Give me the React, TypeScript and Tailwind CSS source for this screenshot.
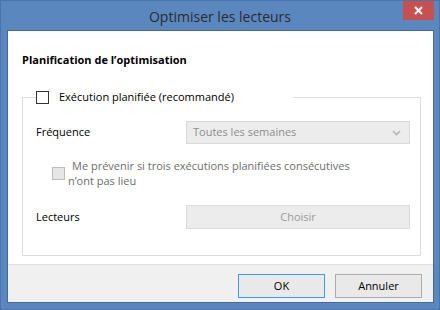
const font = { fontFamily: '"Segoe UI", "Open Sans", "Noto Sans", sans-serif' };

const Box = ({ disabled }: { disabled?: boolean }) => (
  <div
    className={
      disabled
        ? "w-[13px] h-[13px] shrink-0 border border-[#bcbcbc] bg-[#e6e6e6]"
        : "w-[13px] h-[13px] shrink-0 border border-[#333333] bg-white"
    }
  />
);

export default function App() {
  return (
    <div
      className="w-[440px] h-[310px] bg-[#5b87bf] border border-[#4b74ab] flex flex-col text-[11px] text-black"
      style={font}
    >
      {/* title bar */}
      <div className="h-[29px] grid grid-cols-[1fr_auto_1fr]">
        <div />
        <div className="text-[14px] text-[#2b2b2b] leading-[29px] pt-[1px]">Optimiser les lecteurs</div>
        <div className="flex justify-end items-start">
          <div className="w-[31px] h-[19px] mr-[5px] bg-[#c75050] flex items-center justify-center">
            <svg width="9" height="9" viewBox="0 0 9 9">
              <path d="M1 1L8 8M8 1L1 8" stroke="white" strokeWidth="2" />
            </svg>
          </div>
        </div>
      </div>

      {/* client */}
      <div className="flex-1 ml-[6px] mr-[5px] mb-[6px] border border-[#44699c] bg-white flex flex-col">
        <div className="flex-1 pl-[14px] pr-[12px] pt-[21px]">
          <div className="font-bold leading-[16px]">Planification de l’optimisation</div>

          <fieldset className="mt-[21px] border border-[#dcdcdc] pb-[26px] pr-[10px] pl-[13px]">
            <legend className="ml-0 w-[257px] flex items-center gap-[10px] leading-[16px]">
              <Box />
              <span>Exécution planifiée (recommandé)</span>
            </legend>

            <div className="grid grid-cols-[150px_1fr] items-center mt-[16px]">
              <span>Fréquence</span>
              <div className="h-[23px] border border-[#d9d9d9] bg-[#ececec] flex items-center justify-between pl-[6px] pr-[8px] text-[#8c8c8c]">
                <span>Toutes les semaines</span>
                <svg width="9" height="6" viewBox="0 0 9 6">
                  <path d="M1 1L4.5 4.5L8 1" stroke="#b5b5b5" strokeWidth="1.6" fill="none" />
                </svg>
              </div>
            </div>

            <div className="flex items-center gap-[3px] ml-[16px] mt-[14px] text-[#6d6d6d] leading-[15px]">
              <Box disabled />
              <div className="flex flex-col">
                <span className="pl-[4px]">Me prévenir si trois exécutions planifiées consécutives</span>
                <span>n’ont pas lieu</span>
              </div>
            </div>

            <div className="grid grid-cols-[150px_1fr] items-center mt-[17px]">
              <span>Lecteurs</span>
              <div className="h-[24px] border border-[#dcdcdc] bg-[#ececec] flex items-center justify-center text-[#9a9a9a]">
                Choisir
              </div>
            </div>
          </fieldset>
        </div>

        {/* footer */}
        <div className="h-[38px] border-t border-[#dfdfdf] bg-[#f0f0f0] flex justify-end items-start gap-[10px] pt-[9px] pr-[11px]">
          <button className="w-[87px] h-[24px] border border-[#3d9be9] bg-[#e9e9e9] text-black">OK</button>
          <button className="w-[87px] h-[24px] border border-[#acacac] bg-[#e9e9e9] text-black">Annuler</button>
        </div>
      </div>
    </div>
  );
}
